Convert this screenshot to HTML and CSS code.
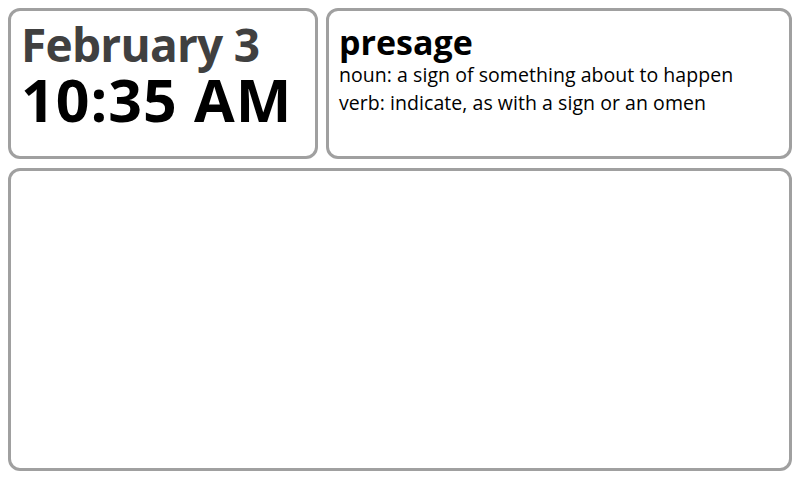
FILE: index.html
```html
<!DOCTYPE html>
<html>
<head>
<meta charset="utf-8">
<link rel="stylesheet" href="styles.css">
</head>
<body>
<div class="screen">
  <div class="top">
    <div class="card clock">
      <div class="date">February 3</div>
      <div class="time">10:35 AM</div>
    </div>
    <div class="card word">
      <div class="term">presage</div>
      <div class="def">noun: a sign of something about to happen</div>
      <div class="def">verb: indicate, as with a sign or an omen</div>
    </div>
  </div>
  <div class="card bottom"></div>
</div>
</body>
</html>
```
FILE: styles.css
```css
html, body {
  margin: 0;
  padding: 0;
  background: #fff;
}
body {
  font-family: "Open Sans", "Noto Sans", sans-serif;
}
.screen {
  padding: 8px 8px 9px 8px;
  height: 480px;
  box-sizing: border-box;
  display: flex;
  flex-direction: column;
  gap: 9px;
}
.top {
  display: flex;
  gap: 8px;
  height: 151px;
}
.card {
  border: 3px solid #a0a0a0;
  border-radius: 12px;
  box-sizing: border-box;
  background: #fff;
}
.clock {
  width: 310px;
  padding: 10px 0 0 10px;
}
.word {
  flex: 1;
  padding: 12px 0 0 10px;
}
.bottom {
  flex: 1;
}
.date {
  font-weight: 700;
  font-size: 46px;
  line-height: 47px;
  color: #404040;
  letter-spacing: -0.75px;
}
.time {
  font-weight: 700;
  font-size: 59px;
  line-height: 62px;
  color: #000;
  letter-spacing: 1px;
}
.term {
  font-weight: 700;
  font-size: 34px;
  line-height: 38px;
  color: #000;
}
.def {
  font-size: 19.5px;
  font-weight: 500;
  line-height: 28px;
  color: #000;
  letter-spacing: 0.05px;
}
```
